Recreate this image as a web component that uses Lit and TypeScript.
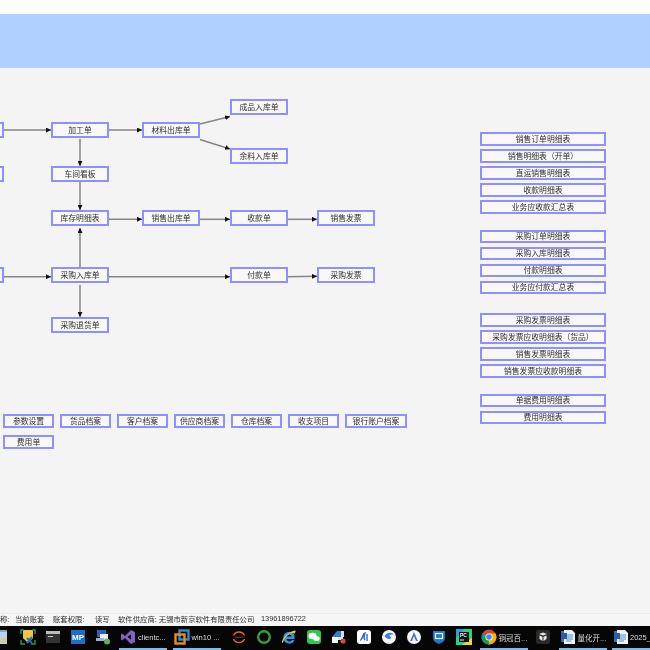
import { LitElement, html, css, svg } from 'lit';
import { customElement } from 'lit/decorators.js';

const NODES = [
  { x: -40, y: 122, w: 43.5, h: 16, label: '' },
  { x: -40, y: 166, w: 43.5, h: 16, label: '' },
  { x: -40, y: 267, w: 43.5, h: 16, label: '' },
  { x: 51, y: 122, w: 58, h: 16, label: '加工单' },
  { x: 142, y: 122, w: 58, h: 16, label: '材料出库单' },
  { x: 230, y: 99, w: 58, h: 16, label: '成品入库单' },
  { x: 230, y: 148, w: 58, h: 16, label: '余料入库单' },
  { x: 51, y: 166, w: 58, h: 16, label: '车间看板' },
  { x: 51, y: 210, w: 58, h: 16, label: '库存明细表' },
  { x: 142, y: 210, w: 58, h: 16, label: '销售出库单' },
  { x: 230, y: 210, w: 58, h: 16, label: '收款单' },
  { x: 317, y: 210, w: 58, h: 16, label: '销售发票' },
  { x: 51, y: 267, w: 58, h: 16, label: '采购入库单' },
  { x: 230, y: 267, w: 58, h: 16, label: '付款单' },
  { x: 317, y: 267, w: 58, h: 16, label: '采购发票' },
  { x: 51, y: 317, w: 58, h: 16, label: '采购退货单' },
];

// page coordinates, the canvas starts at y = 68
const ARROWS = [
  [3, 130, 51, 130],
  [109, 130, 142, 130],
  [200, 124, 230, 116.5],
  [200, 139.5, 230, 149],
  [80, 139, 80, 166],
  [80, 182, 80, 210],
  [109, 219.3, 142, 219.3],
  [200, 219.3, 230, 219.3],
  [288, 219.3, 317, 219.3],
  [80, 267, 80, 228],
  [3, 276.7, 51, 276.7],
  [109, 276.7, 230, 276.7],
  [288, 276.7, 317, 276.3],
  [80, 285, 80, 317],
];

const REPORTS = [
  ['销售订单明细表', '销售明细表（开单）', '直运销售明细表', '收款明细表', '业务应收款汇总表'],
  ['采购订单明细表', '采购入库明细表', '付款明细表', '业务应付款汇总表'],
  ['采购发票明细表', '采购发票应收明细表（货品）', '销售发票明细表', '销售发票应收款明细表'],
  ['单据费用明细表', '费用明细表'],
];

const ARCHIVES = ['参数设置', '货品档案', '客户档案', '供应商档案', '仓库档案', '收支项目', '银行账户档案', '费用单'];

const STATUS = [
  { text: '称:', cls: 's1' },
  { text: '当前账套', cls: 's2' },
  { text: '账套权限:', cls: 's3' },
  { text: '读写', cls: 's4' },
  { text: '软件供应商: 无锡市新京软件有限责任公司', cls: 's5' },
  { text: '13961896722', cls: 's6' },
];

const ICONS: Record<string, unknown> = {
  window: svg`<rect x="0" y="1" width="16" height="14" fill="#b9d3e6"/><rect x="10" y="9" width="6" height="5" fill="#d9c79a"/><rect x="0" y="1" width="16" height="2" fill="#7ea9cc"/>`,
  tool: svg`<path d="M3 1h10v8l-5 5-5-5z" fill="#f2c53a"/><path d="M1 11v4h4M15 11v4h-4M1 5V1h3M15 5V1h-3" fill="none" stroke="#2f9a4e" stroke-width="1.4"/><path d="M7 9l5 5M12 8l-5 6" stroke="#1f6fc0" stroke-width="2"/>`,
  terminal: svg`<rect x="1" y="2" width="14" height="12" fill="#333"/><rect x="1" y="2" width="14" height="3" fill="#bbb"/><rect x="3" y="7" width="5" height="1" fill="#ccc"/>`,
  mp: svg`<rect x="1" y="1" width="14" height="14" fill="#1c6fc2"/><text x="8" y="11" text-anchor="middle" font-size="8" font-weight="700" font-family="Liberation Sans, sans-serif" fill="#fff">MP</text>`,
  network: svg`<rect x="2" y="1" width="9" height="7" fill="#2c62b8"/><rect x="5" y="5" width="8" height="6" fill="#e8eef5"/><rect x="1" y="9" width="8" height="3" fill="#9fb4cc"/><circle cx="12" cy="12.5" r="3" fill="#5cb160"/>`,
  vs: svg`<path d="M11 1l4 2v10l-4 2-6-6-3 2.400-1-1V5.600l1-1L5 7zM11 5.200L7.600 8 11 10.800z" fill="#8661c5"/>`,
  vmware: svg`<rect x="5.500" y="1.500" width="9" height="9" fill="none" stroke="#2a8fd0" stroke-width="2.400"/><rect x="1.500" y="5.500" width="9" height="9" fill="none" stroke="#f08a1d" stroke-width="2.400"/>`,
  arcs: svg`<path d="M2.500 6.500a6 6 0 0 1 11 0M2.500 10a6 6 0 0 0 11 0" fill="none" stroke="#e8651e" stroke-width="1.500"/><rect x="4" y="7.700" width="8" height="1" fill="#7a4a22"/>`,
  ring: svg`<circle cx="8" cy="8" r="5.800" fill="none" stroke="#3f9b3a" stroke-width="2.400"/>`,
  ie: svg`<path d="M2.500 9a5.700 5.700 0 0 1 11-2.500V10H5.500a3 3 0 0 0 5.500 1h2.500a5.700 5.700 0 0 1-11-2zM5.500 7.500h5.200a2.700 2.700 0 0 0-5.200 0z" fill="#2b9be8"/><path d="M1 14c-1-3 5-11 13-12.500 2 1-1 3-1 3-3-2-9 3-11 9z" fill="#f5c32c"/>`,
  wechat: svg`<rect x="1" y="1" width="14" height="14" rx="3" fill="#2dc84d"/><ellipse cx="6.500" cy="7" rx="4" ry="3.300" fill="#fff"/><ellipse cx="10.500" cy="9.500" rx="3.200" ry="2.600" fill="#fff"/>`,
  blocks: svg`<path d="M1 8l5-6h4v6z" fill="#2f7fd0"/><rect x="1" y="8" width="6" height="6" fill="#fff"/><rect x="7" y="8" width="5" height="3" fill="#dfe9f4"/><rect x="10" y="2" width="3" height="6" fill="#cfe0f2"/><circle cx="12" cy="12" r="2.600" fill="#d8483a"/>`,
  note: svg`<rect x="1" y="1" width="14" height="14" rx="3" fill="#fff"/><path d="M4 11c2 1 3-7 5-7-1 3-1 6 0 7M11 5v7" fill="none" stroke="#2a68d8" stroke-width="1.400"/>`,
  back: svg`<circle cx="8" cy="8" r="7" fill="#f2f5fb"/><path d="M3.500 7c3-4 8-4 9-1-2-1-4 0-4 1l2 2c-2 2-5 1-7-2z" fill="#3a7fe6"/>`,
  letter: svg`<circle cx="8" cy="8" r="7" fill="#f4f6fa"/><path d="M8 3l3.800 9H10L8 7l-2 5H4.200z" fill="#3a72c8"/>`,
  shield: svg`<path d="M2 2h12v7c0 3-3 5-6 6-3-1-6-3-6-6z" fill="#1f78c8"/><rect x="4.500" y="4.500" width="7" height="5" fill="none" stroke="#e8f2fb" stroke-width="1.200"/>`,
  pycharm: svg`<path d="M0 0h16v16H0z" fill="#21d789"/><path d="M0 0h9L0 9z" fill="#21a7e0"/><path d="M16 16H6l10-7z" fill="#f5d327"/><rect x="3" y="3" width="10" height="10" fill="#111"/><text x="4" y="8.300" font-size="5" font-weight="700" font-family="Liberation Sans, sans-serif" fill="#eee">PC</text><rect x="4" y="10.500" width="4" height="1" fill="#eee"/>`,
  chrome: svg`<circle cx="8" cy="8" r="7.500" fill="#db4437"/><path d="M8 8L1.500 4.200A7.500 7.500 0 0 0 8 15.500l3.200-5.500z" fill="#0f9d58"/><path d="M8 8l-.2 7.500A7.500 7.500 0 0 0 14.600 4.500H8z" fill="#f4b400"/><circle cx="8" cy="8" r="3.600" fill="#fff"/><circle cx="8" cy="8" r="2.800" fill="#4285f4"/>`,
  cube: svg`<rect x="1" y="1" width="14" height="14" rx="2" fill="#2a2a26"/><path d="M4 5l4-1.500L12 5l-4 1.500zM4.500 6.500l3 1.300V12l-3-2zM11.500 6.500l-3 1.300V12l3-2z" fill="#e8e8e8"/>`,
  doc: svg`<rect x="1" y="2" width="9" height="11" fill="#2f6fc4"/><path d="M4 1h8l3 3v11H4z" fill="#eef3fa"/><path d="M6 6h7M6 8h7M6 10h7M6 12h5" stroke="#5a8ac8"/><rect x="1" y="4" width="6" height="6" fill="#2b5ea8"/>`,
};

const TASKBAR = [
  { icon: 'window', cls: 'edge' },
  { icon: 'tool' },
  { icon: 'terminal' },
  { icon: 'mp' },
  { icon: 'network' },
  { icon: 'vs', text: 'clientc...', cls: 'open lead' },
  { icon: 'vmware', text: 'win10 ...', cls: 'open' },
  { icon: 'arcs' },
  { icon: 'ring' },
  { icon: 'ie' },
  { icon: 'wechat' },
  { icon: 'blocks' },
  { icon: 'note' },
  { icon: 'back' },
  { icon: 'letter' },
  { icon: 'shield' },
  { icon: 'pycharm' },
  { icon: 'chrome', text: '铜冠百...', cls: 'open lead tight' },
  { icon: 'cube' },
  { icon: 'doc', text: '量化开...', cls: 'open lead' },
  { icon: 'doc', text: '2025_', cls: 'open rest' },
];

@customElement('app-root')
export class AppRoot extends LitElement {
  static styles = css`
    :host {
      display: flex;
      flex-direction: column;
      width: 650px;
      height: 650px;
      overflow: hidden;
      background: #fff;
      font-family: "Liberation Sans", "Noto Sans CJK SC", sans-serif;
      font-size: 7.8px;
      color: #2e2e2e;
    }

    .top { height: 14px; flex: none; }
    .banner { height: 54px; flex: none; background: #b0d0ff; }

    .main {
      flex: 1;
      min-height: 0;
      display: flex;
      background: #f4f4f4;
      filter: blur(0.3px);
    }

    .left { width: 480px; flex: none; }

    .canvas {
      position: relative;
      height: 346px;
      overflow: hidden;
    }

    .canvas svg {
      position: absolute;
      inset: 0;
      width: 100%;
      height: 100%;
    }

    .box {
      display: flex;
      align-items: center;
      justify-content: center;
      box-sizing: border-box;
      border: 2px solid #8f8fff;
      background: #f8f8f8;
      padding-bottom: 1px;
      white-space: nowrap;
    }

    .node { position: absolute; }

    .archives {
      display: flex;
      flex-wrap: wrap;
      gap: 7px 6px;
      width: 420px;
      padding-left: 3px;
    }

    .archives .box { width: 51px; height: 14px; }
    .archives .box.long { width: 62px; }

    .reports {
      width: 126px;
      display: flex;
      flex-direction: column;
      gap: 16px;
      padding-top: 64px;
    }

    .group { display: flex; flex-direction: column; gap: 3.5px; }
    .group:nth-child(2) { margin-bottom: 3px; }
    .group .box { height: 13.5px; }

    .status {
      height: 13px;
      flex: none;
      display: flex;
      align-items: center;
      background: #f6f6f6;
      border-top: 1px solid #ececec;
      box-sizing: border-box;
      padding-bottom: 3px;
      font-size: 7.35px;
      white-space: nowrap;
      filter: blur(0.3px);
    }

    .s1 { width: 15px; }
    .s2 { width: 38px; }
    .s3 { width: 42px; }
    .s4 { width: 23px; }
    .s5 { width: 143px; }

    .taskbar {
      height: 24px;
      flex: none;
      display: flex;
      background: #060606;
      color: #ddd;
      font-size: 7.5px;
      overflow: hidden;
    }

    .slot {
      position: relative;
      flex: none;
      width: 25px;
      box-sizing: border-box;
      display: flex;
      align-items: center;
      justify-content: center;
      gap: 2px;
      padding-bottom: 2px;
      white-space: nowrap;
      filter: blur(0.3px);
    }

    .slot svg { width: 16px; height: 16px; flex: none; }

    .edge { width: 15.5px; justify-content: flex-start; overflow: hidden; }
    .edge svg { margin-left: -9px; }

    .open {
      width: 48px;
      margin-right: 5.5px;
      justify-content: flex-start;
      padding-left: 1px;
    }

    .open::after {
      content: "";
      position: absolute;
      left: 0;
      right: 0;
      bottom: 0;
      height: 2px;
      background: #79bdf0;
    }

    .lead { margin-left: 3.5px; }
    .tight { margin-right: 2.5px; }
    .rest { width: 37.5px; margin-right: 0; gap: 1px; }
  `;

  renderBox(label: string) {
    return html`<div class="box ${label.length > 5 ? 'long' : ''}">${label}</div>`;
  }

  renderCanvas() {
    return html`
      <div class="canvas">
        <svg viewBox="0 68 480 346">
          <defs>
            <marker id="head" markerWidth="5" markerHeight="5" refX="5" refY="2.500" orient="auto" markerUnits="userSpaceOnUse">
              <path d="M0 0L5 2.500L0 5z" fill="#111"></path>
            </marker>
          </defs>
          ${ARROWS.map(([x1, y1, x2, y2]) => svg`
            <line x1=${x1} y1=${y1} x2=${x2} y2=${y2} stroke="#858585" stroke-width="1.500" marker-end="url(#head)"></line>
          `)}
        </svg>
        ${NODES.map(n => html`
          <div class="box node" style="left:${n.x}px;top:${n.y - 68}px;width:${n.w}px;height:${n.h}px">${n.label}</div>
        `)}
      </div>
    `;
  }

  render() {
    return html`
      <div class="top"></div>
      <div class="banner"></div>
      <div class="main">
        <div class="left">
          ${this.renderCanvas()}
          <div class="archives">${ARCHIVES.map(a => this.renderBox(a))}</div>
        </div>
        <div class="reports">
          ${REPORTS.map(g => html`<div class="group">${g.map(r => html`<div class="box">${r}</div>`)}</div>`)}
        </div>
      </div>
      <div class="status">
        ${STATUS.map(s => html`<span class=${s.cls}>${s.text}</span>`)}
      </div>
      <div class="taskbar">
        ${TASKBAR.map(t => html`
          <div class="slot ${t.cls ?? ''}">
            <svg viewBox="0 0 16 16">${ICONS[t.icon]}</svg>
            ${t.text ? html`<span>${t.text}</span>` : ''}
          </div>
        `)}
      </div>
    `;
  }
}
